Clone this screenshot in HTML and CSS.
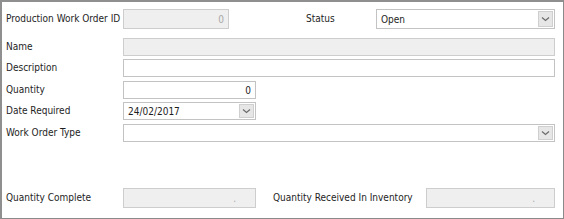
FILE: index.html
```html
<!DOCTYPE html>
<html>
<head>
<meta charset="utf-8">
<link rel="stylesheet" href="styles.css">
</head>
<body>
<div class="frame">
  <div class="row r1">
    <div class="label">Production Work Order ID</div>
    <div class="field disabled w-id num"><span class="grey">0</span></div>
    <div class="label status-label">Status</div>
    <div class="field combo w-status"><span class="val">Open</span><span class="btn"><svg width="9" height="6" viewBox="0 0 9 6"><path d="M1 1.5 L4.5 4.5 L8 1.5" fill="none" stroke="#6b6b6b" stroke-width="1.2"/></svg></span></div>
  </div>
  <div class="row r2">
    <div class="label">Name</div>
    <div class="field disabled grow"></div>
  </div>
  <div class="row r3">
    <div class="label">Description</div>
    <div class="field grow"></div>
  </div>
  <div class="row r4">
    <div class="label">Quantity</div>
    <div class="field w-qty num"><span>0</span></div>
  </div>
  <div class="row r5">
    <div class="label">Date Required</div>
    <div class="field combo w-qty"><span class="val">24/02/2017</span><span class="btn"><svg width="9" height="6" viewBox="0 0 9 6"><path d="M1 1.5 L4.5 4.5 L8 1.5" fill="none" stroke="#6b6b6b" stroke-width="1.2"/></svg></span></div>
  </div>
  <div class="row r6">
    <div class="label">Work Order Type</div>
    <div class="field combo grow"><span class="val"></span><span class="btn"><svg width="9" height="6" viewBox="0 0 9 6"><path d="M1 1.5 L4.5 4.5 L8 1.5" fill="none" stroke="#6b6b6b" stroke-width="1.2"/></svg></span></div>
  </div>
  <div class="row r7">
    <div class="label">Quantity Complete</div>
    <div class="field disabled w-qty num dot"><span class="grey">.</span></div>
    <div class="label recv-label">Quantity Received In Inventory</div>
    <div class="field disabled w-recv num dot"><span class="grey">.</span></div>
  </div>
</div>
</body>
</html>
```
FILE: styles.css
```css
html, body {
  margin: 0;
  padding: 0;
  background: #ffffff;
}
.frame {
  box-sizing: border-box;
  width: 564px;
  height: 219px;
  border: 1px solid #8a8a8a;
  border-top: 2px solid #8f8f8f;
  border-left: 2px solid #8f8f8f;
  padding: 0 8px 0 4px;
  font-family: "DejaVu Sans Condensed", "DejaVu Sans", sans-serif;
  font-size: 10px;
  color: #1e1e1e;
  background: #fff;
}
.row {
  display: flex;
  align-items: center;
}
.label {
  width: 117px;
  flex: none;
  white-space: nowrap;
  padding-bottom: 2px;
}
.field {
  box-sizing: border-box;
  border: 1px solid #c3c3c3;
  background: #fff;
  display: flex;
  align-items: center;
  padding: 0 4px;
  flex: none;
}
.disabled {
  background: #efefef;
  border-color: #cdcdcd;
}
.num {
  justify-content: flex-end;
}
.dot {
  padding-right: 19px;
}
.grey {
  color: #a8a8a8;
}
.grow {
  flex: 1;
}
.r1 { margin-top: 7px; height: 20px; }
.r1 .field { height: 20px; }
.r2 { margin-top: 9px; height: 18px; }
.r2 .field { height: 18px; }
.r3 { margin-top: 3px; height: 18px; }
.r3 .field { height: 18px; }
.r4 { margin-top: 4px; height: 18px; }
.r4 .field { height: 18px; }
.r5 { margin-top: 3px; height: 18px; }
.r5 .field { height: 18px; }
.r6 { margin-top: 4px; height: 18px; }
.r6 .field { height: 18px; }
.r7 { margin-top: 46px; height: 20px; }
.r7 .field { height: 20px; }
.w-id { width: 106px; }
.w-status { width: 179px; }
.w-qty { width: 133px; }
.w-recv { width: 129px; }
.status-label {
  width: 70px;
  margin-left: 77px;
}
.recv-label {
  width: 153px;
  margin-left: 17px;
}
.combo {
  justify-content: space-between;
  padding: 0 1px 0 4px;
}
.combo .val {
  flex: 1;
}
.btn {
  box-sizing: border-box;
  width: 15px;
  height: calc(100% - 2px);
  background: #e6e6e6;
  border: 1px solid #cfcfcf;
  display: flex;
  align-items: center;
  justify-content: center;
}
```
